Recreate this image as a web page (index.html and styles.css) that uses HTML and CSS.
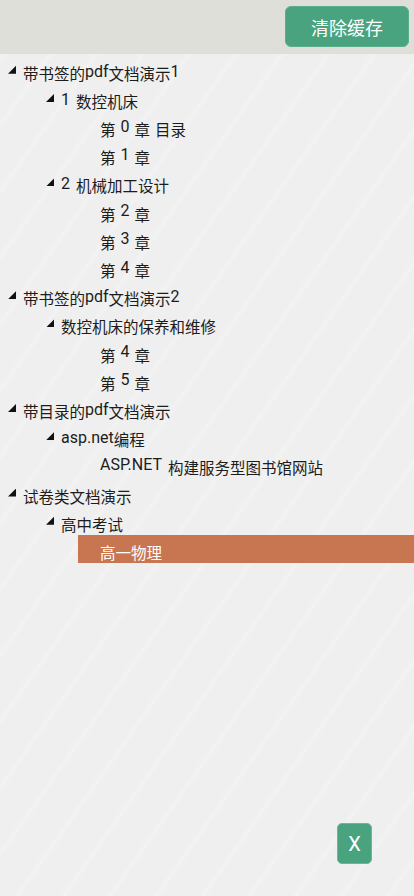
FILE: index.html
```html
<!DOCTYPE html>
<html lang="zh-CN">

<head>
    <meta charset="UTF-8">
    <meta name="viewport" content="width=device-width, initial-scale=1.0">
    <title>文档目录</title>
    <link rel="stylesheet" href="styles.css">
</head>

<body>
    <div class="header">
        <button class="btn-clear" type="button">清除缓存</button>
    </div>

    <ul class="tree">
        <li class="node lv0"><i class="arrow"></i><span class="label">带书签的<span class="lat">pdf</span>文档演示<span class="lat">1</span></span></li>
        <li class="node lv1"><i class="arrow"></i><span class="label"><span class="lat sp">1</span>数控机床</span></li>
        <li class="node lv2"><span class="label">第<span class="lat gap">0</span>章<span class="after">目录</span></span></li>
        <li class="node lv2"><span class="label">第<span class="lat gap">1</span>章</span></li>
        <li class="node lv1"><i class="arrow"></i><span class="label"><span class="lat sp">2</span>机械加工设计</span></li>
        <li class="node lv2"><span class="label">第<span class="lat gap">2</span>章</span></li>
        <li class="node lv2"><span class="label">第<span class="lat gap">3</span>章</span></li>
        <li class="node lv2"><span class="label">第<span class="lat gap">4</span>章</span></li>
        <li class="node lv0"><i class="arrow"></i><span class="label">带书签的<span class="lat">pdf</span>文档演示<span class="lat">2</span></span></li>
        <li class="node lv1"><i class="arrow"></i><span class="label">数控机床的保养和维修</span></li>
        <li class="node lv2"><span class="label">第<span class="lat gap">4</span>章</span></li>
        <li class="node lv2"><span class="label">第<span class="lat gap">5</span>章</span></li>
        <li class="node lv0"><i class="arrow"></i><span class="label">带目录的<span class="lat">pdf</span>文档演示</span></li>
        <li class="node lv1"><i class="arrow"></i><span class="label"><span class="lat">asp.net</span>编程</span></li>
        <li class="node lv2"><span class="label"><span class="lat sp">ASP.NET</span>构建服务型图书馆网站</span></li>
        <li class="node lv0"><i class="arrow"></i><span class="label">试卷类文档演示</span></li>
        <li class="node lv1"><i class="arrow"></i><span class="label">高中考试</span></li>
        <li class="node lv2 selected"><span class="label">高一物理</span></li>
    </ul>

    <button class="btn-close" type="button">X</button>
</body>

</html>
```

FILE: styles.css
```css
* {
    margin: 0;
    padding: 0;
    box-sizing: border-box;
}

html,
body {
    height: 100%;
}

body {
    font-family: "Noto Sans CJK SC", Roboto, sans-serif;
    background-color: #efefef;
    background-image: repeating-linear-gradient(125deg,
            rgba(255, 255, 255, 0) 0,
            rgba(255, 255, 255, 0) 30px,
            rgba(255, 255, 255, 0.22) 34px,
            rgba(255, 255, 255, 0) 38px);
    color: #1c1c1c;
    overflow: hidden;
}

.header {
    height: 54px;
    background-color: #dfdfda;
    display: flex;
    justify-content: flex-end;
    padding: 6px 5px 0 0;
}

.btn-clear {
    width: 124px;
    height: 41px;
    border: 1px solid #5aae8b;
    border-radius: 6px;
    background-color: #48a37e;
    color: #fff;
    font-family: "Noto Sans CJK SC", sans-serif;
    font-size: 18px;
    cursor: pointer;
}

.tree {
    list-style: none;
    padding-top: 1.6px;
}

.node {
    height: 28.2px;
    display: flex;
    align-items: center;
    font-size: 15.5px;
    white-space: nowrap;
}

.node .label {
    position: relative;
    top: 3px;
}

.lv0 {
    padding-left: 8px;
}

.lv1 {
    padding-left: 46px;
}

.lv2 {
    padding-left: 78px;
}

.lv2 .label {
    top: 0;
    padding: 6px 0 0 22px;
    flex: 1;
    height: 100%;
    display: flex;
    align-items: center;
}

.arrow {
    width: 8px;
    height: 8px;
    margin-right: 7px;
    margin-top: 0;
    background-color: #111;
    clip-path: polygon(100% 0, 100% 100%, 0 100%);
}

.lat {
    font-family: Roboto, sans-serif;
    font-size: 16px;
    position: relative;
    top: -3px;
}

.sp {
    margin-right: 6px;
}

.gap {
    margin: 0 5px;
}

.after {
    margin-left: 5px;
}

.selected .label {
    background-color: #c87652;
    color: #fff;
}

.btn-close {
    position: absolute;
    left: 337px;
    top: 823px;
    width: 35px;
    height: 41px;
    border: 1px solid #6bb896;
    border-radius: 5px;
    background-color: #48a37e;
    color: #fff;
    font-family: Roboto, sans-serif;
    font-size: 20px;
    cursor: pointer;
}
```
